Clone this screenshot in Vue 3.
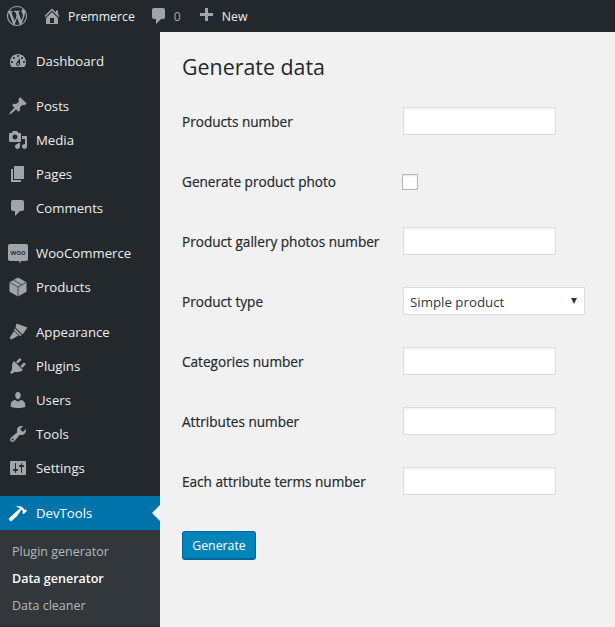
<script setup>
const icons = {
  wp: 'M20 10c0-5.51-4.49-10-10-10C4.48 0 0 4.49 0 10c0 5.52 4.48 10 10 10 5.51 0 10-4.48 10-10zM7.78 15.37L4.37 6.22c.55-.02 1.17-.08 1.17-.08.5-.06.44-1.13-.06-1.11 0 0-1.45.11-2.37.11-.18 0-.37 0-.58-.01C4.12 2.69 6.87 1.11 10 1.11c2.33 0 4.45.87 6.05 2.34-.68-.11-1.65.39-1.65 1.58 0 .74.45 1.36.9 2.1.35.61.55 1.36.55 2.46 0 1.49-1.4 5-1.4 5l-3.03-8.37c.54-.02.82-.17.82-.17.5-.05.44-1.25-.06-1.22 0 0-1.44.12-2.38.12-.87 0-2.33-.12-2.33-.12-.5-.03-.56 1.2-.06 1.22l.92.08 1.26 3.41zM17.41 10c.24-.64.74-1.87.43-4.25.7 1.29 1.05 2.71 1.05 4.25 0 3.29-1.73 6.24-4.4 7.78.97-2.59 1.94-5.2 2.92-7.78zM6.1 18.09C3.12 16.65 1.11 13.53 1.11 10c0-1.3.23-2.48.72-3.59C3.25 10.3 4.67 14.2 6.1 18.09zm4.03-6.63l2.58 6.98c-.86.29-1.76.45-2.71.45-.79 0-1.57-.11-2.29-.33.81-2.38 1.62-4.74 2.42-7.1z',
  home: 'M16 8.5l1.53 1.53-1.06 1.06L10 4.62l-6.47 6.47-1.06-1.06L10 2.5l4 4v-2h2v4zm-6-2.46l6 5.99V18H4v-5.97zM12 17v-5H8v5h4z',
  comment: 'M5 2h9c1.1 0 2 .9 2 2v7c0 1.1-.9 2-2 2h-2l-5 5v-5H5c-1.1 0-2-.9-2-2V4c0-1.1.9-2 2-2z',
  plus: 'M17 7v3h-5v5H9v-5H4V7h5V2h3v5h5z',
  dashboard: 'M3.76 16h12.48c1.1-1.37 1.76-3.11 1.76-5 0-4.42-3.58-8-8-8s-8 3.58-8 8c0 1.89.66 3.63 1.76 5zM10 4c.55 0 1 .45 1 1s-.45 1-1 1-1-.45-1-1 .45-1 1-1zM6 6c.55 0 1 .45 1 1s-.45 1-1 1-1-.45-1-1 .45-1 1-1zm8 0c.55 0 1 .45 1 1s-.45 1-1 1-1-.45-1-1 .45-1 1-1zm-5.37 5.55L12 7v6c0 1.1-.9 2-2 2s-2-.9-2-2c0-.57.24-1.08.63-1.45zM4 10c.55 0 1 .45 1 1s-.45 1-1 1-1-.45-1-1 .45-1 1-1zm12 0c.55 0 1 .45 1 1s-.45 1-1 1-1-.45-1-1 .45-1 1-1zm-5 3c0-.55-.45-1-1-1s-1 .45-1 1 .45 1 1 1 1-.45 1-1z',
  pin: 'M10.44 3.02l1.82-1.82 6.36 6.35-1.83 1.82c-1.05-.68-2.48-.57-3.41.36l-.75.75c-.92.93-1.04 2.35-.35 3.41l-1.83 1.82-2.41-2.41-2.8 2.79c-.42.42-3.38 2.71-3.8 2.29s1.86-3.39 2.28-3.81l2.79-2.79L4.1 9.36l1.83-1.82c1.05.69 2.48.57 3.4-.36l.75-.75c.93-.92 1.05-2.35.36-3.41z',
  media: 'M13 11V4c0-.55-.45-1-1-1h-1.67L9 1H5L3.67 3H2c-.55 0-1 .45-1 1v7c0 .55.45 1 1 1h10c.55 0 1-.45 1-1zM7 4.5c1.38 0 2.5 1.12 2.5 2.5S8.38 9.5 7 9.5 4.5 8.38 4.5 7 5.62 4.5 7 4.5zM14 6h5v10.5c0 1.38-1.12 2.5-2.5 2.5S14 17.88 14 16.5s1.12-2.5 2.5-2.5c.17 0 .34.02.5.05V9h-3V6zm-4 8.05V13h2v3.5c0 1.38-1.12 2.5-2.5 2.5S7 17.88 7 16.5 8.12 14 9.5 14c.17 0 .34.02.5.05z',
  pages: 'M6 15V2h10v13H6zm-1 1h8v2H3V5h2v11z',
  brush: 'M8.500 1.500L19.500 5.500 14.500 12.500 7.500 5.500zM6.800 6.300L13.700 13.200 12 14 6 8zM6 9L10.500 13.500 3.500 17.500 1.500 16z',
  plugin: 'M13.110 4.360L9.870 7.600 8 5.730l3.240-3.240c.35-.34 1.050-.2 1.560.32.520.51.660 1.210.310 1.550zm-8 1.770l.91-1.120 9.010 9.010-1.190.84c-.71.71-2.630 1.160-3.820 1.160H6.140L4.900 17.260c-.59.59-1.540.59-2.120 0-.59-.58-.59-1.530 0-2.120l1.240-1.240v-3.880c0-1.130.4-3.190 1.090-3.890zm7.260 3.970l3.240-3.240c.34-.35 1.040-.21 1.550.31.520.51.660 1.210.310 1.550l-3.240 3.250z',
  users: 'M10 9.250c-2.270 0-2.730-3.440-2.730-3.440C7 4.020 7.820 2 9.970 2c2.160 0 2.980 2.020 2.710 3.810 0 0-.41 3.440-2.680 3.440zm0 2.570L12.720 10c2.390 0 4.520 2.330 4.520 4.530v2.490s-3.650 1.130-7.240 1.130c-3.650 0-7.240-1.130-7.240-1.130v-2.490c0-2.250 1.940-4.480 4.470-4.480z',
  tools: 'M16.680 9.770c-1.340 1.340-3.300 1.670-4.950.99l-5.410 6.520c-.99.99-2.590.99-3.580 0s-.99-2.59 0-3.570l6.520-5.420c-.68-1.650-.35-3.610.99-4.950 1.280-1.280 3.120-1.620 4.720-1.060l-2.890 2.890 2.820 2.820 2.860-2.870c.53 1.580.18 3.390-1.080 4.650zM3.810 16.210c.4.39 1.040.39 1.430 0 .4-.4.4-1.040 0-1.430-.39-.4-1.030-.4-1.430 0-.39.39-.39 1.030 0 1.430z',
  settings: 'M18 16V4c0-.55-.45-1-1-1H3c-.55 0-1 .45-1 1v12c0 .55.45 1 1 1h14c.55 0 1-.45 1-1zM8 11h1c.55 0 1 .45 1 1s-.45 1-1 1H8v1.500c0 .28-.22.5-.5.5s-.5-.22-.5-.5V13H6c-.55 0-1-.45-1-1s.45-1 1-1h1V5.500c0-.28.22-.5.5-.5s.5.22.5.5V11zm5-2h-1c-.55 0-1-.45-1-1s.45-1 1-1h1V5.500c0-.28.22-.5.5-.5s.5.22.5.5V7h1c.55 0 1 .45 1 1s-.45 1-1 1h-1v5.500c0 .28-.22.5-.5.5s-.5-.22-.5-.5V9z',
  hammer: 'M17.700 6.320l1.410 1.420-3.470 3.410-1.420-1.420.84-.82c-.32-.76-.81-1.570-1.510-2.310l-4.610 6.590-5.260 4.700c-.39.39-1.020.39-1.420 0l-1.200-1.210c-.39-.39-.39-1.020 0-1.410l10.970-9.920c-1.370-.86-3.210-1.460-5.670-1.480 2.700-.82 4.950-.93 6.580-.3 1.700.66 2.820 2.200 3.910 3.580z',
}

const menu = [
  [{ label: 'Dashboard', icon: 'dashboard' }],
  [
    { label: 'Posts', icon: 'pin' },
    { label: 'Media', icon: 'media' },
    { label: 'Pages', icon: 'pages' },
    { label: 'Comments', icon: 'comment' },
  ],
  [
    { label: 'WooCommerce', icon: 'woo' },
    { label: 'Products', icon: 'box' },
  ],
  [
    { label: 'Appearance', icon: 'brush' },
    { label: 'Plugins', icon: 'plugin' },
    { label: 'Users', icon: 'users' },
    { label: 'Tools', icon: 'tools' },
    { label: 'Settings', icon: 'settings' },
  ],
]

const fields = [
  { label: 'Products number', type: 'text' },
  { label: 'Generate product photo', type: 'check' },
  { label: 'Product gallery photos number', type: 'text' },
  { label: 'Product type', type: 'select' },
  { label: 'Categories number', type: 'text' },
  { label: 'Attributes number', type: 'text' },
  { label: 'Each attribute terms number', type: 'text' },
]
</script>

<template>
  <div class="wrap">
    <header class="adminbar">
      <svg class="bar-logo" viewBox="0 0 20 20"><path :d="icons.wp" /></svg>
      <a class="bar-item site">
        <svg viewBox="0 0 20 20"><path :d="icons.home" /></svg>
        <span>Premmerce</span>
      </a>
      <a class="bar-item comments">
        <svg viewBox="0 0 20 20"><path :d="icons.comment" /></svg>
        <span class="count">0</span>
      </a>
      <a class="bar-item new">
        <svg viewBox="0 0 20 20"><path :d="icons.plus" /></svg>
        <span>New</span>
      </a>
    </header>

    <div class="body-row">
      <aside class="sidebar">
        <ul v-for="(group, i) in menu" :key="i" class="menu-group">
          <li v-for="item in group" :key="item.label" class="menu-item">
            <svg v-if="item.icon === 'woo'" class="menu-icon" viewBox="0 0 20 20">
              <path d="M2 1h16c1.100 0 2 .9 2 2v13c0 1.100-.9 2-2 2h-5l-1 2.500-1-2.500H2c-1.100 0-2-.9-2-2V3c0-1.100.9-2 2-2z" />
              <text class="woo-text" x="10" y="12" text-anchor="middle">woo</text>
            </svg>
            <svg v-else-if="item.icon === 'box'" class="menu-icon" viewBox="0 0 20 20">
              <path d="M10 0.500l8.500 4.800v9.400L10 19.500l-8.500-4.800V5.300z" />
              <path class="box-lines" d="M1.500 5.300L10 10.100l8.500-4.800M5.500 3.100l8.500 4.800M10 10.100v9.400" />
            </svg>
            <svg v-else class="menu-icon" viewBox="0 0 20 20"><path :d="icons[item.icon]" /></svg>
            <span>{{ item.label }}</span>
          </li>
        </ul>
        <div class="menu-item current">
          <svg class="menu-icon" viewBox="0 0 20 20"><path :d="icons.hammer" /></svg>
          <span>DevTools</span>
          <i class="arrow"></i>
        </div>
        <ul class="submenu">
          <li>Plugin generator</li>
          <li class="active">Data generator</li>
          <li>Data cleaner</li>
        </ul>
      </aside>

      <main class="content">
        <h1>Generate data</h1>
        <form class="form" @submit.prevent>
          <div v-for="field in fields" :key="field.label" class="row">
            <label>{{ field.label }}</label>
            <input v-if="field.type === 'text'" class="text" type="text" />
            <input v-else-if="field.type === 'check'" class="check" type="checkbox" />
            <div v-else class="select-box">
              <select>
                <option>Simple product</option>
              </select>
              <i class="caret"></i>
            </div>
          </div>
          <button class="button" type="submit">Generate</button>
        </form>
      </main>
    </div>
  </div>
</template>

<style>
html,
body {
  margin: 0;
  background: #f1f1f1;
}
</style>

<style scoped>
.wrap {
  width: 615px;
  height: 627px;
  overflow: hidden;
  font-family: 'Open Sans', 'Noto Sans', sans-serif;
  font-size: 13px;
  color: #23282d;
}

svg {
  display: block;
  fill: currentColor;
}

.adminbar {
  display: flex;
  align-items: center;
  height: 32px;
  background: #23282d;
  color: #eee;
  font-size: 12.300px;
}

.bar-logo {
  width: 20px;
  height: 20px;
  margin-left: 7px;
  color: #a0a5aa;
}

.bar-item {
  display: flex;
  align-items: center;
}

.bar-item svg {
  width: 20px;
  height: 20px;
  color: #a0a5aa;
}

.site {
  margin-left: 15px;
  gap: 6px;
}

.comments {
  margin-left: 14px;
  gap: 5px;
}

.count {
  color: #a0a5aa;
}

.new {
  margin-left: 15px;
  gap: 6px;
}

.body-row {
  display: flex;
  height: 595px;
}

.sidebar {
  width: 160px;
  flex: none;
  padding-top: 12px;
  background: #23282d;
  color: #eee;
}

.menu-group {
  margin: 0 0 11px;
  padding: 0;
  list-style: none;
}

.menu-item {
  position: relative;
  display: flex;
  align-items: center;
  height: 34px;
  padding-left: 8px;
  gap: 8px;
  font-size: 13.200px;
}

.menu-icon {
  width: 20px;
  height: 20px;
  color: #a0a5aa;
}

.woo-text {
  fill: #23282d;
  font-size: 7.500px;
  font-weight: 600;
}

.box-lines {
  fill: none;
  stroke: #23282d;
  stroke-width: 0.7;
}

.current {
  background: #0073aa;
  color: #fff;
}

.current .menu-icon {
  color: #fff;
}

.arrow {
  position: absolute;
  top: 9px;
  right: 0;
  border: 8px solid transparent;
  border-right-color: #f1f1f1;
  border-left-width: 0;
}

.submenu {
  margin: 0;
  padding: 8px 0 7px;
  list-style: none;
  background: #32373c;
  color: #b4b9be;
  font-size: 12.500px;
}

.submenu li {
  display: flex;
  align-items: center;
  height: 27px;
  padding-left: 12px;
}

.submenu .active {
  color: #fff;
  font-weight: 600;
}

.content {
  flex: 1;
  padding: 0 22px;
}

h1 {
  margin: 0;
  padding: 20px 0 0;
  height: 40px;
  font-size: 21.400px;
  font-weight: 400;
  line-height: 29px;
}

.row {
  display: flex;
  align-items: center;
  height: 60px;
}

.row label {
  width: 221px;
  flex: none;
  margin-bottom: 2px;
  font-size: 13.600px;
  font-weight: 500;
  -webkit-text-stroke: 0.2px #23282d;
}

.text {
  box-sizing: border-box;
  width: 153px;
  height: 28px;
  margin: 0 0 2px;
  border: 1px solid #ddd;
  background: #fff;
  box-shadow: inset 0 1px 2px rgba(0, 0, 0, 0.07);
}

.check {
  appearance: none;
  box-sizing: border-box;
  width: 16px;
  height: 16px;
  margin: 0 0 0 -1px;
  border: 1px solid #b4b9be;
  background: #fff;
  box-shadow: inset 0 1px 2px rgba(0, 0, 0, 0.1);
}

.select-box {
  position: relative;
  width: 182px;
  height: 28px;
  margin-bottom: 2px;
}

.select-box select {
  appearance: none;
  box-sizing: border-box;
  display: block;
  width: 100%;
  height: 100%;
  padding: 2px 0 0 6px;
  border: 1px solid #ddd;
  border-radius: 0;
  background: #fff;
  color: #32373c;
  font: 13.300px 'Open Sans', 'Noto Sans', sans-serif;
}

.caret {
  position: absolute;
  top: 11px;
  right: 8px;
  border-top: 6px solid #32373c;
  border-left: 3px solid transparent;
  border-right: 3px solid transparent;
}

.button {
  display: block;
  box-sizing: border-box;
  width: 74px;
  height: 29px;
  margin-top: 19px;
  padding: 0;
  border: 1px solid #006799;
  border-bottom-width: 2px;
  border-radius: 3px;
  background: #0085ba;
  color: #fff;
  font: 12.300px 'Open Sans', 'Noto Sans', sans-serif;
}
</style>
